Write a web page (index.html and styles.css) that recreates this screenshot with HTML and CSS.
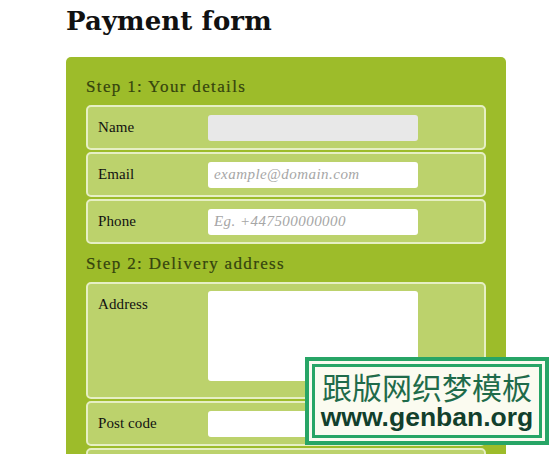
FILE: index.html
```html
<!DOCTYPE html>
<html lang="en">
<head>
    <meta charset="UTF-8">
    <meta name="viewport" content="width=device-width, initial-scale=1.0">
    <title>Payment form</title>
    <link rel="stylesheet" href="styles.css">
</head>
<body>
    <main class="page">
        <h1>Payment form</h1>

        <form class="payment-form">
            <h2 class="step-title">Step 1: Your details</h2>
            <div class="rows">
                <div class="row">
                    <label for="name">Name</label>
                    <input id="name" class="field field-focus" type="text">
                </div>
                <div class="row">
                    <label for="email">Email</label>
                    <input id="email" class="field" type="text" placeholder="example@domain.com">
                </div>
                <div class="row">
                    <label for="phone">Phone</label>
                    <input id="phone" class="field" type="text" placeholder="Eg. +447500000000">
                </div>
            </div>

            <h2 class="step-title second">Step 2: Delivery address</h2>
            <div class="rows">
                <div class="row row-tall">
                    <label for="address">Address</label>
                    <textarea id="address" class="field field-area"></textarea>
                </div>
                <div class="row">
                    <label for="postcode">Post code</label>
                    <input id="postcode" class="field" type="text">
                </div>
                <div class="row row-cut"></div>
            </div>
        </form>
    </main>

    <!-- watermark stamped over the page -->
    <div class="stamp">
        <div class="stamp-ring">
            <div class="stamp-inner">
                <div class="stamp-title">跟版网织梦模板</div>
                <div class="stamp-url">www.genban.org</div>
            </div>
        </div>
    </div>
</body>
</html>
```

FILE: styles.css
```css
* {
    margin: 0;
    padding: 0;
    box-sizing: border-box;
}

html, body {
    height: 454px;
    overflow: hidden;
}

body {
    position: relative;
    background: #fff;
    font-family: "Liberation Serif", "Times New Roman", serif;
    color: #111;
}

.page {
    width: 440px;
    margin-left: 66px;
}

h1 {
    font-family: "DejaVu Serif", Georgia, serif;
    font-size: 26px;
    font-weight: bold;
    line-height: 30px;
    padding-top: 6px;
    margin-bottom: 21px;
    color: #111;
    letter-spacing: 0.1px;
}

.payment-form {
    background: #9dbc2a;
    border-radius: 5px 5px 0 0;
    padding: 20px 20px 30px;
}

.step-title {
    font-size: 17px;
    font-weight: normal;
    line-height: 20px;
    letter-spacing: 1.35px;
    color: #35440e;
    margin-bottom: 8px;
    -webkit-text-stroke: 0.2px #35440e;
}

.step-title.second {
    margin-top: 10px;
    margin-bottom: 8px;
}

.rows {
    display: flex;
    flex-direction: column;
    gap: 2px;
}

.row {
    display: flex;
    align-items: center;
    height: 45px;
    padding: 0 10px;
    background: #bcd26c;
    border: 2px solid #e6efc4;
    border-radius: 5px;
}

.row-tall {
    align-items: flex-start;
    height: 117px;
    padding-top: 7px;
}

.row label {
    width: 110px;
    flex-shrink: 0;
    font-size: 15px;
    letter-spacing: 0.1px;
    color: #111;
}

.row-tall label {
    padding-top: 5px;
}

.field {
    display: block;
    width: 210px;
    height: 26px;
    padding: 0 6px;
    border: none;
    border-radius: 3px;
    background: #fff;
    font-family: "Liberation Serif", "Times New Roman", serif;
    font-size: 15px;
    letter-spacing: 0.45px;
    outline: none;
    resize: none;
}

.field::placeholder {
    color: #a6a6a6;
    font-style: italic;
    opacity: 1;
}

.field-focus {
    background: #e8e8e8;
}

.field-area {
    height: 90px;
}

.stamp {
    position: absolute;
    left: 305px;
    top: 357px;
    width: 244px;
    height: 88px;
    border: 4px solid #27a566;
}

.stamp-ring {
    height: 100%;
    border: 3px solid #fbfbf0;
}

.stamp-inner {
    height: 100%;
    border: 3px solid #27a566;
    background: #fbfbf0;
    padding-top: 1px;
    text-align: center;
}

.stamp-title {
    font-family: "Noto Sans CJK SC", sans-serif;
    font-size: 30px;
    line-height: 36px;
    color: #1f6b4a;
}

.stamp-url {
    font-family: "Liberation Sans", Arial, sans-serif;
    font-size: 26.5px;
    font-weight: bold;
    line-height: 26px;
    color: #123f2c;
}
```
